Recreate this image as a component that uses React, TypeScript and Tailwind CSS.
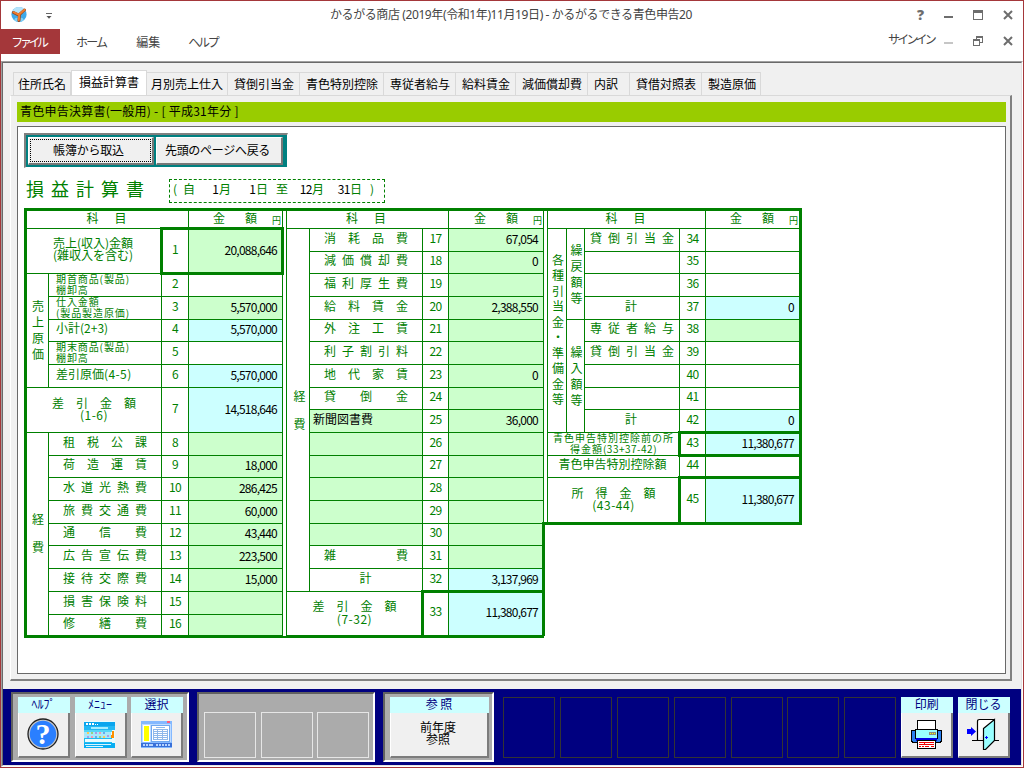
import { Fragment, type ReactNode } from 'react'
import clsx from 'clsx'

type Tone = 'white' | 'green' | 'cyan'

const TONES: Record<Tone, string> = {
  white: 'bg-white',
  green: 'bg-[#ccffcc]',
  cyan: 'bg-[#ccffff]',
}

type Line = {
  no: number
  row: number
  span?: number
  label?: ReactNode
  full?: boolean // label also takes the category column
  tone?: Tone
  labelTone?: Tone
  value?: string
}

const TABS = [
  { name: '住所氏名', w: 'w-[58px]' },
  { name: '損益計算書', w: 'w-[76px]', active: true },
  { name: '月別売上仕入', w: 'w-[81px]' },
  { name: '貸倒引当金', w: 'w-[72px]' },
  { name: '青色特別控除', w: 'w-[84px]' },
  { name: '専従者給与', w: 'w-[72px]' },
  { name: '給料賃金', w: 'w-[60px]' },
  { name: '減価償却費', w: 'w-[72px]' },
  { name: '内訳', w: 'w-[42px]' },
  { name: '貸借対照表', w: 'w-[72px]' },
  { name: '製造原価', w: 'w-[59px]' },
]

function Spread({ text, className }: { text: string; className?: string }) {
  return (
    <div className={clsx('flex w-[84px] justify-between', className)}>
      {[...text].map((c, i) => <span key={i} className="w-3 text-center">{c}</span>)}
    </div>
  )
}

function Small({ lines }: { lines: string[] }) {
  return (
    <div className="w-full pl-[7px] pt-[2px] text-[10px] leading-[11px] tracking-[0.9px] whitespace-nowrap">
      {lines.map(l => <div key={l}>{l}</div>)}
    </div>
  )
}

function Plain({ children }: { children: ReactNode }) {
  return <div className="w-full pl-[7px] whitespace-nowrap">{children}</div>
}

function Total({ text, sub }: { text: string; sub: string }) {
  return (
    <div className="flex flex-col items-center pt-[3px] leading-[12.500px]">
      <Spread text={text} />
      <div className="tracking-[0.5px]">{sub}</div>
    </div>
  )
}

const sales: Line[] = [
  {
    no: 1, row: 2, span: 2, full: true, tone: 'green', value: '20,088,646',
    label: <div className="pr-[2px] text-center text-[12px] leading-[12px]">売上(収入)金額<br />(雑収入を含む)</div>,
  },
  { no: 2, row: 4, label: <Small lines={['期首商品(製品)', '棚卸高']} /> },
  { no: 3, row: 5, tone: 'green', value: '5,570,000', label: <Small lines={['仕入金額', '(製品製造原価)']} /> },
  { no: 4, row: 6, tone: 'cyan', value: '5,570,000', label: <Plain>小計(2+3)</Plain> },
  { no: 5, row: 7, label: <Small lines={['期末商品(製品)', '棚卸高']} /> },
  { no: 6, row: 8, tone: 'cyan', value: '5,570,000', label: <Plain>差引原価<span className="tracking-[0.4px]">(4-5)</span></Plain> },
  { no: 7, row: 9, span: 2, full: true, tone: 'cyan', value: '14,518,646', label: <Total text="差引金額" sub="(1-6)" /> },
  { no: 8, row: 11, tone: 'green', label: '租税公課' },
  { no: 9, row: 12, tone: 'green', label: '荷造運賃', value: '18,000' },
  { no: 10, row: 13, tone: 'green', label: '水道光熱費', value: '286,425' },
  { no: 11, row: 14, tone: 'green', label: '旅費交通費', value: '60,000' },
  { no: 12, row: 15, tone: 'green', label: '通信費', value: '43,440' },
  { no: 13, row: 16, tone: 'green', label: '広告宣伝費', value: '223,500' },
  { no: 14, row: 17, tone: 'green', label: '接待交際費', value: '15,000' },
  { no: 15, row: 18, tone: 'green', label: '損害保険料' },
  { no: 16, row: 19, tone: 'green', label: '修繕費' },
]

const expenses: Line[] = [
  { no: 17, row: 2, tone: 'green', label: '消耗品費', value: '67,054' },
  { no: 18, row: 3, tone: 'green', label: '減価償却費', value: '0' },
  { no: 19, row: 4, tone: 'green', label: '福利厚生費' },
  { no: 20, row: 5, tone: 'green', label: '給料賃金', value: '2,388,550' },
  { no: 21, row: 6, tone: 'green', label: '外注工賃' },
  { no: 22, row: 7, tone: 'green', label: '利子割引料' },
  { no: 23, row: 8, tone: 'green', label: '地代家賃', value: '0' },
  { no: 24, row: 9, tone: 'green', label: '貸倒金' },
  {
    no: 25, row: 10, tone: 'green', labelTone: 'green', value: '36,000',
    label: <div className="w-full pl-[3px] text-black">新聞図書費</div>,
  },
  { no: 26, row: 11, tone: 'green', labelTone: 'green' },
  { no: 27, row: 12, tone: 'green', labelTone: 'green' },
  { no: 28, row: 13, tone: 'green', labelTone: 'green' },
  { no: 29, row: 14, tone: 'green', labelTone: 'green' },
  { no: 30, row: 15, tone: 'green', labelTone: 'green' },
  { no: 31, row: 16, tone: 'green', label: '雑費' },
  { no: 32, row: 17, tone: 'cyan', label: <div className="pr-px">計</div>, value: '3,137,969' },
  { no: 33, row: 18, span: 2, full: true, tone: 'cyan', value: '11,380,677', label: <Total text="差引金額" sub="(7-32)" /> },
]

const reserves: Line[] = [
  { no: 34, row: 2, label: '貸倒引当金' },
  { no: 35, row: 3 },
  { no: 36, row: 4 },
  { no: 37, row: 5, tone: 'cyan', label: <div className="pr-[2px]">計</div>, value: '0' },
  { no: 38, row: 6, tone: 'green', label: '専従者給与' },
  { no: 39, row: 7, label: '貸倒引当金' },
  { no: 40, row: 8 },
  { no: 41, row: 9 },
  { no: 42, row: 10, tone: 'cyan', label: <div className="pr-[2px]">計</div>, value: '0' },
  {
    no: 43, row: 11, full: true, tone: 'cyan', value: '11,380,677',
    label: (
      <div className="pt-[2px] text-center text-[10px] leading-[11px] tracking-[1px] whitespace-nowrap">
        青色申告特別控除前の所<br />得金額<span className="tracking-[0.5px]">(33+37-42)</span>
      </div>
    ),
  },
  { no: 44, row: 12, full: true, label: <div className="pr-[2px] whitespace-nowrap">青色申告特別控除額</div> },
  { no: 45, row: 13, span: 2, full: true, tone: 'cyan', value: '11,380,677', label: <Total text="所得金額" sub="(43-44)" /> },
]

const cell = 'flex items-center justify-center border-r border-b border-[#008000] min-w-0 min-h-0'

function Lines({ lines, labelCol }: { lines: Line[]; labelCol: number }) {
  return (
    <>
      {lines.map(l => {
        const rows = `${l.row} / span ${l.span ?? 1}`
        return (
          <Fragment key={l.no}>
            <div
              className={clsx(cell, 'pb-[5px] leading-[14px]', TONES[l.labelTone ?? 'white'])}
              style={{ gridRow: rows, gridColumn: `${l.full ? 1 : labelCol} / ${labelCol + 1}` }}
            >
              {typeof l.label === 'string' ? <Spread text={l.label} /> : l.label}
            </div>
            <div className={clsx(cell, 'pb-[5px] tracking-[-0.6px]')} style={{ gridRow: rows, gridColumn: labelCol + 1 }}>
              {l.no}
            </div>
            <div
              className={clsx(cell, 'justify-end! pr-[5px] pb-[3px] text-black tracking-[-0.75px]', TONES[l.tone ?? 'white'])}
              style={{ gridRow: rows, gridColumn: labelCol + 2 }}
            >
              {l.value}
            </div>
          </Fragment>
        )
      })}
    </>
  )
}

function Head({ cols, shift }: { cols: number; shift: string }) {
  return (
    <>
      <div className={clsx(cell, 'pb-[3px]')} style={{ gridRow: 1, gridColumn: `1 / ${cols}` }}>
        <div className={clsx('flex w-10 justify-between', shift)}><span>科</span><span>目</span></div>
      </div>
      <div className={clsx(cell, 'justify-end! pr-px pb-[3px]')} style={{ gridRow: 1, gridColumn: cols }}>
        <span>金</span>
        <span className="ml-[20px]">額</span>
        <span className="ml-[15px] pt-[6px] text-[9px]">円</span>
      </div>
    </>
  )
}

function Side({ text, rows, col, className }: { text: string; rows: string; col: number; className: string }) {
  return (
    <div className={clsx(cell, 'flex-col', className)} style={{ gridRow: rows, gridColumn: col }}>
      {[...text].map((c, i) => <span key={i}>{c}</span>)}
    </div>
  )
}

function Ledger() {
  return (
    <div className="ml-[6px] mt-[5px] flex items-start text-[12px] text-[#008000]">
      <div className="border-t-3 border-l-3 border-b-2 border-[#008000]">
        <div className="grid grid-cols-[22px_113px_27px_94px] grid-rows-[18px_23px_22px_23px_23px_22px_23px_23px_22px_23px_23px_22px_23px_23px_22px_23px_23px_23px_21px]">
          <Head cols={4} shift="-ml-[2px]" />
          <Side text="売上原価" rows="4 / 9" col={1} className="pb-[2px] pl-px leading-[16px]" />
          <Side text="経費" rows="11 / 20" col={1} className="pb-[3px] pl-px leading-[28px]" />
          <Lines lines={sales} labelCol={2} />
          <div className="z-10 col-[3/5] row-[2/4] -mt-[2px] -ml-[2px] -mr-px -mb-px border-3 border-[#008000]" />
        </div>
      </div>

      <div className="border-t-3 border-b-2 border-[#008000] pl-[3px]">
        <div className="grid border-l border-[#008000] grid-cols-[23px_113px_26px_95px] grid-rows-[18px_23px_22px_23px_23px_22px_23px_23px_22px_23px_23px_22px_23px_23px_22px_23px_23px_23px_21px]">
          <Head cols={4} shift="-ml-[3px]" />
          <Side text="経費" rows="2 / 18" col={1} className="pb-px pl-[3px] leading-[28px]" />
          <Lines lines={expenses} labelCol={2} />
          <div className="z-10 col-[3/5] row-[18/20] -mt-[2px] -ml-[2px] -mr-px border-3 border-b border-[#008000]" />
          <div className="z-10 col-[4/5] row-[15/18] -mt-[2px] -mr-px w-[3px] justify-self-end bg-[#008000]" />
        </div>
      </div>

      <div className="border-t-3 border-r-2 border-b-2 border-[#008000] pl-[3px]">
        <div className="grid border-l border-[#008000] grid-cols-[19px_18px_95px_26px_94px] grid-rows-[18px_23px_22px_23px_23px_22px_23px_23px_22px_23px_23px_22px_23px_22px]">
          <Head cols={5} shift="-ml-[2px]" />
          <Side text="各種引当金・準備金等" rows="2 / 11" col={1} className="pb-[3px] pl-[2px] leading-[15.5px]" />
          <Side text="繰戻額等" rows="2 / 6" col={2} className="pb-px pl-[2px] leading-[16px]" />
          <Side text="繰入額等" rows="6 / 11" col={2} className="pl-[2px] leading-[16px]" />
          <Lines lines={reserves} labelCol={3} />
          <div className="z-10 col-[4/6] row-[11/12] -mt-[2px] -ml-[2px] -mb-px border-3 border-r border-[#008000]" />
          <div className="z-10 col-[4/6] row-[13/15] -mt-[2px] -ml-[2px] border-3 border-r border-b border-[#008000]" />
          {/* closes the gap between this block's lower edge and the middle one */}
          <div className="z-10 col-[1/2] row-[14/15] -ml-[4px] h-px w-[4px] self-end bg-[#008000]" />
        </div>
      </div>
    </div>
  )
}

function HelpIcon() {
  return (
    <svg viewBox="0 0 32 32" className="size-8">
      <circle cx="16" cy="16" r="15" fill="#c8c8c8" stroke="#202020" strokeWidth="1.3" />
      <circle cx="16" cy="16" r="13.2" fill="#2a7fff" />
      <text x="16" y="26" textAnchor="middle" fontSize="30" fontWeight="bold" fill="#fff" fontFamily="Liberation Serif, serif">?</text>
    </svg>
  )
}

function MenuIcon() {
  return (
    <svg viewBox="0 0 31 27" className="h-[27px] w-[31px]" shapeRendering="crispEdges">
      <rect width="31" height="27" fill="#e8fbff" />
      <rect y="1" width="31" height="4" fill="#0aa5ee" />
      <path d="M2 2h2v2H2zM5 2h2v2H5zM8 2h2v2H8zM11 3h1v1h-1zM13 3h1v1h-1z" fill="#fff" />
      <path d="M0 5h31v4H0z" fill="#22b8f5" />
      <path d="M7 6h17v2H7z" fill="#a5ecff" />
      <path d="M0 9h28v2H0z" fill="#55d6f6" />
      <path d="M0 11h27v6H0z" fill="#a6e8fa" />
      <path d="M3 11h2v2H3zM19 15h2v2h-2z" fill="#ffc857" />
      <path d="M7 11h2v2H7zM15 15h2v2h-2z" fill="#9bd080" />
      <path d="M11 11h2v2h-2zM3 15h2v2H3zM23 14h2v2h-2z" fill="#a99be8" />
      <path d="M15 11h2v2h-2zM7 15h2v2H7z" fill="#f49ab5" />
      <path d="M19 11h2v2h-2zM11 15h2v2h-2z" fill="#68a9f0" />
      <path d="M28 10h2v7h-2zM27 14h1v3h-1z" fill="#ff9000" />
      <path d="M0 17h28v1H0zM0 21h28v1H0zM0 18h1v3H0z" fill="#20bbf0" />
      <path d="M0 22h31v5H0z" fill="#08aef2" />
      <path d="M1 23h26v1H1zM2 25h17v1H2z" fill="#d8f6ff" />
    </svg>
  )
}

function SelectIcon() {
  return (
    <svg viewBox="0 0 31 27" className="h-[27px] w-[31px]" shapeRendering="crispEdges">
      <rect width="31" height="27" rx="1" fill="#84b9ff" />
      <rect x="26" width="3" height="2" fill="#ff5a7a" />
      <rect x="1" y="3" width="29" height="18" fill="#bfdcff" />
      <rect x="2" y="4" width="7" height="17" fill="#fff" />
      <rect x="3" y="5" width="5" height="15" fill="#ffff00" />
      <rect x="10.5" y="4.5" width="18" height="16" fill="#fff" stroke="#6fa8f0" />
      <path d="M15 6.5h9M12 8.5h15M12 10.5h15M12 12.5h15M12 14.5h15M12 16.5h15M12 18.5h15M12.500 8v11M16.500 8v11M21.500 8v11M26.500 8v11" stroke="#8fb8ea" fill="none" />
      <rect y="22" width="31" height="4" fill="#3970d8" />
      <path d="M2 23h2v2H2zM5 23h2v2H5zM8 23h4v2H8zM15 23h2v2h-2zM18 23h2v2h-2zM21 23h2v2h-2zM24 23h2v2h-2zM27 23h2v2h-2z" fill="#b6d4ff" />
    </svg>
  )
}

function PrintIcon() {
  return (
    <svg viewBox="0 0 31 29" className="h-[29px] w-[31px]" shapeRendering="crispEdges">
      <path d="M.5 10.500h30v11l-2 1H2.500l-2-1z" fill="#2a80f0" stroke="#000" />
      <rect x="6.500" y=".5" width="18" height="10" fill="#fff" stroke="#000" />
      <rect x="4.500" y="9.500" width="22" height="9" fill="#99ffff" stroke="#000" />
      <rect x="5" y="18" width="21" height="3" fill="#0000e0" />
      <rect x="18" y="12" width="7" height="3" fill="#8c8c80" />
      <path d="M19 13h1v1h-1zM21 13h1v1h-1zM23 13h1v1h-1z" fill="#ffff00" />
      <rect x="6.500" y="20.500" width="18" height="8" fill="#fff" stroke="#000" />
      <path d="M8 22.500h15M8 24.500h5M14 24.500h9M8 26.500h2M11 26.500h2M14 26.500h4M20 26.500h3M13.500 22v3" stroke="#f00000" fill="none" />
    </svg>
  )
}

function CloseIcon() {
  return (
    <svg viewBox="0 0 33 32" className="h-8 w-[33px]">
      <path d="M5 22.500h11M27 22.500h5" stroke="#000" />
      <path d="M10.500 22V3.500q0-2 2-2h14v4" fill="#fff" stroke="#000" strokeWidth="1.200" />
      <path d="M16.500 10.500L27.500 1.500v21l-9 9h-2z" fill="#99ffff" stroke="#000" strokeWidth="1.200" />
      <path d="M0 11h4V9l5 4.500L4 18v-2H0z" fill="#0000ff" />
      <path d="M19.500 18v3M18 19.500h3" stroke="#0000ff" />
    </svg>
  )
}

function KeyButton({ title, children, className = 'w-[52px]' }: { title: string; children: ReactNode; className?: string }) {
  return (
    <div className={clsx('flex h-[61px] shrink-0 flex-col', className)}>
      <div className="h-4 bg-[#ccffff] pr-px text-center text-[12px] leading-[13px] whitespace-pre text-[#000080]">{title}</div>
      <div className="flex flex-1 items-center justify-center border-r-2 border-b-2 border-l border-r-[#7c7c7c] border-b-[#7c7c7c] border-l-white bg-[#f0f0f0] pr-px pb-px text-black">
        {children}
      </div>
    </div>
  )
}

const well = 'h-[70px] shrink-0 border-2 border-t-[#606060] border-l-[#606060] border-r-white border-b-white bg-[#ababab] flex pl-[5px]'

function Footer() {
  return (
    <div className="flex h-[76px] w-[1018px] bg-[#000080] pl-[8px] pt-[3px]">
      <div className={clsx(well, 'w-[178px] gap-[4.5px] pt-[3px]')}>
        <KeyButton title="ﾍﾙﾌﾟ"><HelpIcon /></KeyButton>
        <KeyButton title="ﾒﾆｭｰ"><MenuIcon /></KeyButton>
        <KeyButton title="選択"><SelectIcon /></KeyButton>
      </div>
      <div className={clsx(well, 'ml-[8px] w-[178px] gap-[4.500px] pt-[18px]')}>
        {[0, 1, 2].map(i => <div key={i} className="h-[46px] w-[52px] border border-[#e6e6e6]" />)}
      </div>
      <div className={clsx(well, 'ml-[8px] w-[111px] pt-[3px]')}>
        <KeyButton title="参 照" className="w-[99px]">
          <div className="pb-[3px] pr-px text-center text-[12px] leading-[12px]">前年度<br />参照</div>
        </KeyButton>
      </div>
      <div className="ml-[9px] flex gap-[4.900px] pt-[5px]">
        {[0, 1, 2, 3, 4, 5, 6].map(i => <div key={i} className="h-[61px] w-[52px] border border-[#333]" />)}
        <KeyButton title="印刷"><PrintIcon /></KeyButton>
        <KeyButton title="閉じる"><CloseIcon /></KeyButton>
      </div>
    </div>
  )
}

function CrossIcon() {
  return (
    <svg viewBox="0 0 10 10" className="size-[10px]">
      <path d="M1 1l8 8M9 1l-8 8" stroke="#6d6d6d" strokeWidth="2" />
    </svg>
  )
}

function TitleBar() {
  return (
    <div className="flex h-[28px] shrink-0 items-center text-[#444]">
      <div className="flex w-[200px] items-center pl-[9px]">
        <svg viewBox="0 0 18 18" className="size-[18px]">
          <circle cx="9" cy="8.500" r="7.600" fill="#3fa9e8" />
          <ellipse cx="9" cy="4.500" rx="6" ry="3.600" fill="#b5e4fb" />
          <ellipse cx="9" cy="13.500" rx="4.500" ry="2" fill="#7fd0f7" />
          <path d="M3.500 6.500l5 2.500M14.500 4L9.500 8.500 9 14.500" stroke="#94451c" strokeWidth="3" fill="none" strokeLinecap="round" />
          <path d="M3.500 6.200l5 2.300M14.500 3.700L9.300 8.300 8.800 14" stroke="#ee7d30" strokeWidth="2" fill="none" strokeLinecap="round" />
        </svg>
        <svg viewBox="0 0 6 6" className="ml-[18px] mt-[2px] size-[6px]">
          <path d="M0 .5h6" stroke="#666" />
          <path d="M.5 3h5L3 5.800z" fill="#555" />
        </svg>
      </div>
      <div className="flex-1 pr-[2px] text-center font-['Noto_Sans','Noto_Sans_CJK_JP',sans-serif] text-[12px] tracking-[-0.400px] whitespace-nowrap">
        かるがる商店 (2019年(令和1年)11月19日) - かるがるできる青色申告20
      </div>
      <div className="flex w-[200px] items-center justify-end pr-[10px]">
        <span className="mr-[20px] font-['Open_Sans',sans-serif] text-[14px] leading-none font-extrabold text-[#6d6d6d]">?</span>
        <div className="mt-[3px] mr-[20px] h-[2px] w-[9px] bg-[#6d6d6d]" />
        <div className="mr-[20px] h-[10px] w-[10px] border border-t-3 border-[#6d6d6d]" />
        <CrossIcon />
      </div>
    </div>
  )
}

function MenuBar() {
  return (
    <div className="flex h-[32px] shrink-0 items-start text-[12px] text-[#444]">
      <div className="flex h-[25px] w-[59px] items-center justify-center bg-[#a4373a] pr-[4px] text-white tracking-[-3.400px]">ファイル</div>
      <div className="ml-[16px] leading-[25px] tracking-[-1.800px]">ホーム</div>
      <div className="ml-[30px] leading-[25px]">編集</div>
      <div className="ml-[28px] leading-[25px] tracking-[-2.200px]">ヘルプ</div>
      <div className="ml-auto mr-[10px] leading-[20px] tracking-[-2.800px]">サインイン</div>
      <div className="mr-[20px] mt-[13px] h-[2px] w-[9px] bg-[#c6c6c6]" />
      <svg viewBox="0 0 10 10" className="mr-[20px] mt-[7px] size-[10px]" shapeRendering="crispEdges">
        <path d="M3.500 4V1.500h6V6.500H7" stroke="#6d6d6d" fill="none" />
        <path d="M3 0h7v2H3zM0 3h7v2H0z" fill="#6d6d6d" />
        <path d="M.5 4v5.500h6V4" stroke="#6d6d6d" fill="none" />
      </svg>
      <div className="mr-[10px] mt-[7px]"><CrossIcon /></div>
    </div>
  )
}

function Tabs() {
  return (
    <div className="flex h-[32px] shrink-0 items-end pl-[10px] text-[12px] text-black">
      {TABS.map(t => (
        <div
          key={t.name}
          className={clsx(
            'shrink-0 border-[#d9d9d9] whitespace-nowrap',
            t.w,
            t.active ? 'z-10 -mb-px h-[26px] border bg-white pl-[7px] leading-[21px]' : 'h-[23px] border-t border-r pl-[6px] leading-[22px]',
            t.name === '住所氏名' && 'border-l pl-[4px]!',
            t.name === '月別売上仕入' && 'pl-[4px]!',
          )}
        >
          {t.name}
        </div>
      ))}
    </div>
  )
}

function Toolbar() {
  const button = 'flex h-[28px] items-center justify-center border-t border-l border-r-2 border-b-2 border-t-white border-l-white border-r-[#777] border-b-[#777] bg-[#f0f0f0]'
  return (
    <div className="ml-[6px] mt-[6px] flex h-[35px] w-[264px] items-start border-t-2 border-l-2 border-r border-b border-t-[#808080] border-l-[#808080] border-r-white border-b-white bg-[#008080] pl-[2px] pt-[2px] text-[12px] text-black">
      <div className={clsx(button, 'w-[126px]')}>
        <div className="flex h-[23px] w-[121px] items-center justify-center border border-dotted border-black pr-[4px] pb-[2px] tracking-[-0.200px]">帳簿から取込</div>
      </div>
      <div className={clsx(button, 'ml-[2px] w-[127px] pr-[3px] pb-[2px] tracking-[-0.300px]')}>先頭のページへ戻る</div>
    </div>
  )
}

function Period() {
  return (
    <div className="ml-[8px] mt-[11px] flex h-[24px] items-center text-[#008000]">
      <div className="flex w-[118px] justify-between pb-[6px] text-[18px] leading-[20px]">
        {[...'損益計算書'].map(c => <span key={c}>{c}</span>)}
      </div>
      <div className="ml-[25px] flex h-[24px] w-[216px] items-center border border-dashed border-[#008000] pb-[5px] pl-[3px] text-[12px]">
        <span className="w-[10px]">(</span>
        <span className="w-[12px]">自</span>
        <span className="w-[24px] text-right text-black">1</span>
        <span className="w-[12px]">月</span>
        <span className="w-[25px] text-right text-black">1</span>
        <span className="w-[20px]">日</span>
        <span className="w-[12px]">至</span>
        <span className="w-[24px] text-right tracking-[-0.500px] text-black">12</span>
        <span className="w-[12px]">月</span>
        <span className="w-[26px] text-right tracking-[-0.500px] text-black">31</span>
        <span className="w-[20px]">日</span>
        <span>)</span>
      </div>
    </div>
  )
}

export default function App() {
  return (
    <div className="flex h-[768px] w-[1024px] flex-col overflow-hidden border border-[#a4373a] bg-white font-['Noto_Sans_CJK_JP',sans-serif]">
      <TitleBar />
      <MenuBar />
      <div className="h-[706px] border border-t-[#a0a0a0] border-l-[#a0a0a0] border-r-white border-b-white">
        <div className="flex h-full flex-col border border-t-[#696969] border-l-[#696969] border-r-[#e3e3e3] border-b-[#e3e3e3] bg-[#f0f0f0]">
          <Tabs />
          <div className="ml-[7px] h-[586px] w-[1002px] shrink-0 border-t border-l border-r-2 border-b-2 border-t-[#d9d9d9] border-l-white border-r-[#808080] border-b-[#808080] pl-[6px] pt-[6px]">
            <div className="h-[20px] w-[989px] bg-[#99cc00] pl-[3px] text-[12px] leading-[17px] tracking-[0.250px] whitespace-pre text-black">
              青色申告決算書(一般用) - [ 平成31年分 ]
            </div>
            <div className="mt-[4px] h-[548px] w-[989px] border border-[#696969] bg-white">
              <Toolbar />
              <Period />
              <Ledger />
            </div>
          </div>
          <div className="mt-auto"><Footer /></div>
        </div>
      </div>
    </div>
  )
}
